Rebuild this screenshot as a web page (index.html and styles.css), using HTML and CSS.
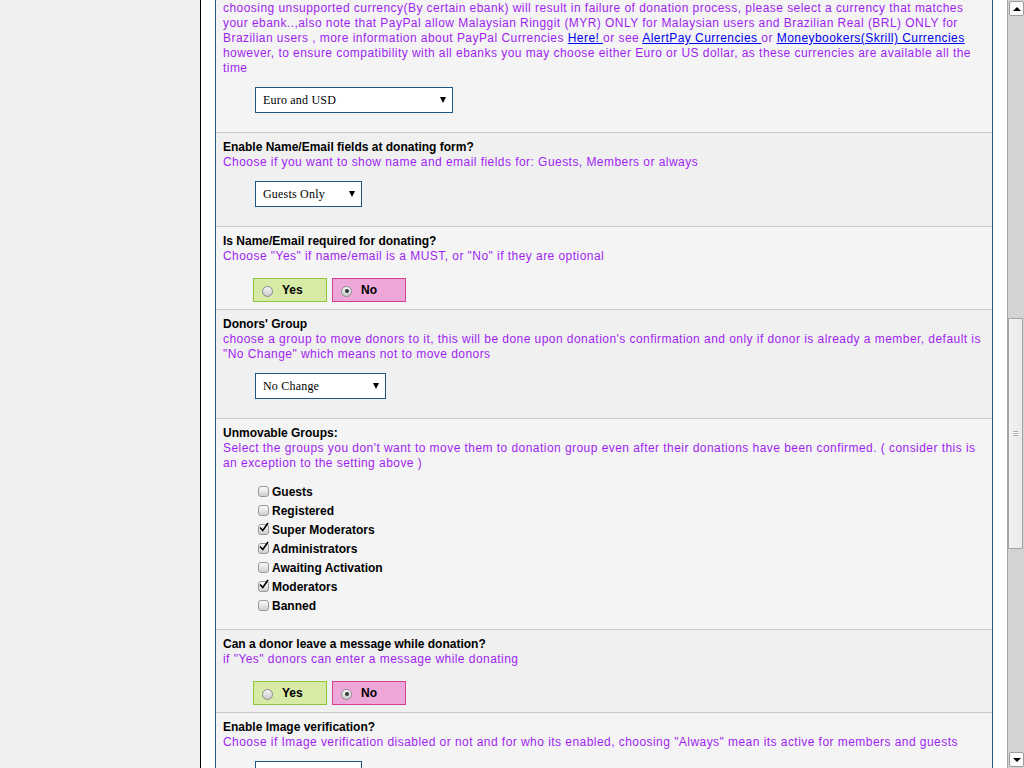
FILE: index.html
```html
<!DOCTYPE html>
<html lang="en">
<head>
    <meta charset="UTF-8">
    <title>Donation settings</title>
    <link rel="stylesheet" href="styles.css">
</head>
<body>

    <div class="sidebar"></div>

    <div class="main">
        <div class="panel">

            <!-- currency (top of this row is scrolled out) -->
            <div class="row light first">
                <div class="desc">
                    choosing unsupported currency(By certain ebank) will result in failure of donation process, please select a currency that matches your ebank..,also note that PayPal allow Malaysian Ringgit (MYR) ONLY for Malaysian users and Brazilian Real (BRL) ONLY for Brazilian users , more information about PayPal Currencies <a href="#">Here! </a>or see <a href="#">AlertPay Currencies </a>or <a href="#">Moneybookers(Skrill) Currencies</a> however, to ensure compatibility with all ebanks you may choose either Euro or US dollar, as these currencies are available all the time
                </div>
                <div class="field">
                    <div class="select w198"><span>Euro and USD</span><span class="arrow"></span></div>
                </div>
            </div>

            <div class="row dark">
                <div class="title">Enable Name/Email fields at donating form?</div>
                <div class="desc">Choose if you want to show name and email fields for: Guests, Members or always</div>
                <div class="field">
                    <div class="select w107"><span>Guests Only</span><span class="arrow"></span></div>
                </div>
            </div>

            <div class="row light">
                <div class="title">Is Name/Email required for donating?</div>
                <div class="desc">Choose "Yes" if name/email is a MUST, or "No" if they are optional</div>
                <div class="yesno">
                    <label class="opt yes"><span class="radio"></span>Yes</label>
                    <label class="opt no"><span class="radio on"></span>No</label>
                </div>
            </div>

            <div class="row dark">
                <div class="title">Donors' Group</div>
                <div class="desc">choose a group to move donors to it, this will be done upon donation's confirmation and only if donor is already a member, default is "No Change" which means not to move donors</div>
                <div class="field">
                    <div class="select w131"><span>No Change</span><span class="arrow"></span></div>
                </div>
            </div>

            <div class="row light">
                <div class="title">Unmovable Groups:</div>
                <div class="desc">Select the groups you don't want to move them to donation group even after their donations have been confirmed. ( consider this is an exception to the setting above )</div>
                <div class="groups">
                    <label class="group"><span class="check"></span>Guests</label>
                    <label class="group"><span class="check"></span>Registered</label>
                    <label class="group"><span class="check on"><svg viewBox="0 0 10 10"><path d="M1 5.5 L3.8 8.5 L9 1"/></svg></span>Super Moderators</label>
                    <label class="group"><span class="check on"><svg viewBox="0 0 10 10"><path d="M1 5.5 L3.8 8.5 L9 1"/></svg></span>Administrators</label>
                    <label class="group"><span class="check"></span>Awaiting Activation</label>
                    <label class="group"><span class="check on"><svg viewBox="0 0 10 10"><path d="M1 5.5 L3.8 8.5 L9 1"/></svg></span>Moderators</label>
                    <label class="group"><span class="check"></span>Banned</label>
                </div>
            </div>

            <div class="row dark">
                <div class="title">Can a donor leave a message while donation?</div>
                <div class="desc">if "Yes" donors can enter a message while donating</div>
                <div class="yesno">
                    <label class="opt yes"><span class="radio"></span>Yes</label>
                    <label class="opt no"><span class="radio on"></span>No</label>
                </div>
            </div>

            <div class="row light">
                <div class="title">Enable Image verification?</div>
                <div class="desc">Choose if Image verification disabled or not and for who its enabled, choosing "Always" mean its active for members and guests</div>
                <div class="field">
                    <div class="select w107"><span>Disabled</span><span class="arrow"></span></div>
                </div>
            </div>

        </div>
    </div>

    <!-- window scrollbar -->
    <div class="scrollbar">
        <div class="sb-btn"><span class="up"></span></div>
        <div class="sb-space top"></div>
        <div class="sb-thumb"><span class="grip"></span></div>
        <div class="sb-space"></div>
        <div class="sb-btn"><span class="down"></span></div>
    </div>

</body>
</html>
```

FILE: styles.css
```css
html, body {
    height: 100%;
}

body {
    margin: 0;
    height: 768px;
    overflow: hidden;
    display: flex;
    font-family: "Liberation Sans", Arial, sans-serif;
    font-size: 12px;
    background-color: #fff;
}

.sidebar {
    width: 200px;
    flex: 0 0 200px;
    background-color: #efefef;
}

.main {
    flex: 1;
    border-left: 1px solid #000;
    padding: 0 14px;
    background-color: #fff;
    overflow: hidden;
}

.panel {
    border-left: 1px solid #245a85;
    border-right: 1px solid #245a85;
    min-height: 100%;
    background-color: #f4f4f4;
}

.row {
    padding: 7px 4px 7px 7px;
    border-top: 1px solid #c9c9c9;
}

.row.first {
    border-top: none;
    padding-top: 1px;
}

.light {
    background-color: #f4f4f4;
}

.dark {
    background-color: #f0f0f0;
}

.title {
    font-weight: bold;
    line-height: 15px;
    color: #000;
}

.desc {
    line-height: 15px;
    color: #a01ff0;
    letter-spacing: 0.45px;
}

.desc a {
    color: #0000ee;
    text-decoration: underline;
}

.field {
    margin: 11px 0 12px 32px;
}

.select {
    display: flex;
    align-items: center;
    justify-content: space-between;
    box-sizing: border-box;
    height: 26px;
    padding: 0 6px 0 7px;
    border: 1px solid #1e5683;
    background-color: #fff;
    font-family: "Liberation Serif", "Times New Roman", serif;
    font-size: 12px;
    letter-spacing: 0.2px;
    color: #000;
}

.select .arrow {
    width: 0;
    height: 0;
    border-left: 3.5px solid transparent;
    border-right: 3.5px solid transparent;
    border-top: 6px solid #000;
}

.w198 { width: 198px; }
.w131 { width: 131px; }
.w107 { width: 107px; }

.yesno {
    display: flex;
    gap: 5px;
    margin: 14px 0 0 30px;
}

.opt {
    display: flex;
    align-items: center;
    box-sizing: border-box;
    width: 74px;
    height: 24px;
    padding-left: 8px;
    font-weight: bold;
    color: #000;
}

.opt.yes {
    background-color: #d8eba6;
    border: 1px solid #8cc63f;
}

.opt.no {
    background-color: #eda7d8;
    border: 1px solid #d43f8e;
}

.radio {
    position: relative;
    box-sizing: border-box;
    width: 11px;
    height: 11px;
    margin: 2px 9px 0 0;
    border: 1px solid #8b8b8b;
    border-radius: 50%;
    background: linear-gradient(#f8f8f8, #c9c9c9);
}

.radio.on::after {
    content: "";
    position: absolute;
    left: 2.5px;
    top: 2.5px;
    width: 4px;
    height: 4px;
    border-radius: 50%;
    background-color: #333;
}

.groups {
    margin: 11px 0 7px 35px;
}

.group {
    display: flex;
    align-items: center;
    height: 19px;
    font-weight: bold;
    color: #000;
}

.check {
    position: relative;
    box-sizing: border-box;
    width: 11px;
    height: 11px;
    margin: 0 3px 1px 0;
    border: 1px solid #9a9a9a;
    border-radius: 3px;
    background: linear-gradient(#fbfbfb, #cfcfcf);
}

.check svg {
    position: absolute;
    left: 0;
    top: -3px;
    width: 10px;
    height: 10px;
    fill: none;
    stroke: #000;
    stroke-width: 1.6;
}

/* fake window scrollbar */
.scrollbar {
    flex: 0 0 16px;
    display: flex;
    flex-direction: column;
    box-sizing: border-box;
    border-left: 1px solid #a6a6a6;
    background-color: #d3d3d3;
    padding: 1px 0 1px 1px;
}

.sb-btn {
    display: flex;
    align-items: center;
    justify-content: center;
    height: 13px;
    width: 13px;
    border: 1px solid #9c9c9c;
    border-radius: 2px;
    background-color: #fafafa;
}

.sb-btn .up,
.sb-btn .down {
    width: 0;
    height: 0;
    border-left: 4px solid transparent;
    border-right: 4px solid transparent;
}

.sb-btn .up {
    border-bottom: 4px solid #000;
}

.sb-btn .down {
    border-top: 4px solid #000;
}

.sb-space {
    flex: 1;
}

.sb-space.top {
    flex: 0 0 302px;
}

.sb-thumb {
    display: flex;
    align-items: center;
    justify-content: center;
    box-sizing: border-box;
    height: 231px;
    width: 15px;
    margin-left: -1px;
    border: 1px solid #a4a4a4;
    background: linear-gradient(to right, #f2f2f2, #eaeaea);
}

.grip {
    width: 5px;
    height: 5px;
    border-top: 1px solid #a9a9a9;
    border-bottom: 1px solid #a9a9a9;
    background: linear-gradient(#fff 1px, #a9a9a9 1px, #a9a9a9 2px, #fff 2px) no-repeat center / 5px 3px;
    box-sizing: border-box;
}
```
